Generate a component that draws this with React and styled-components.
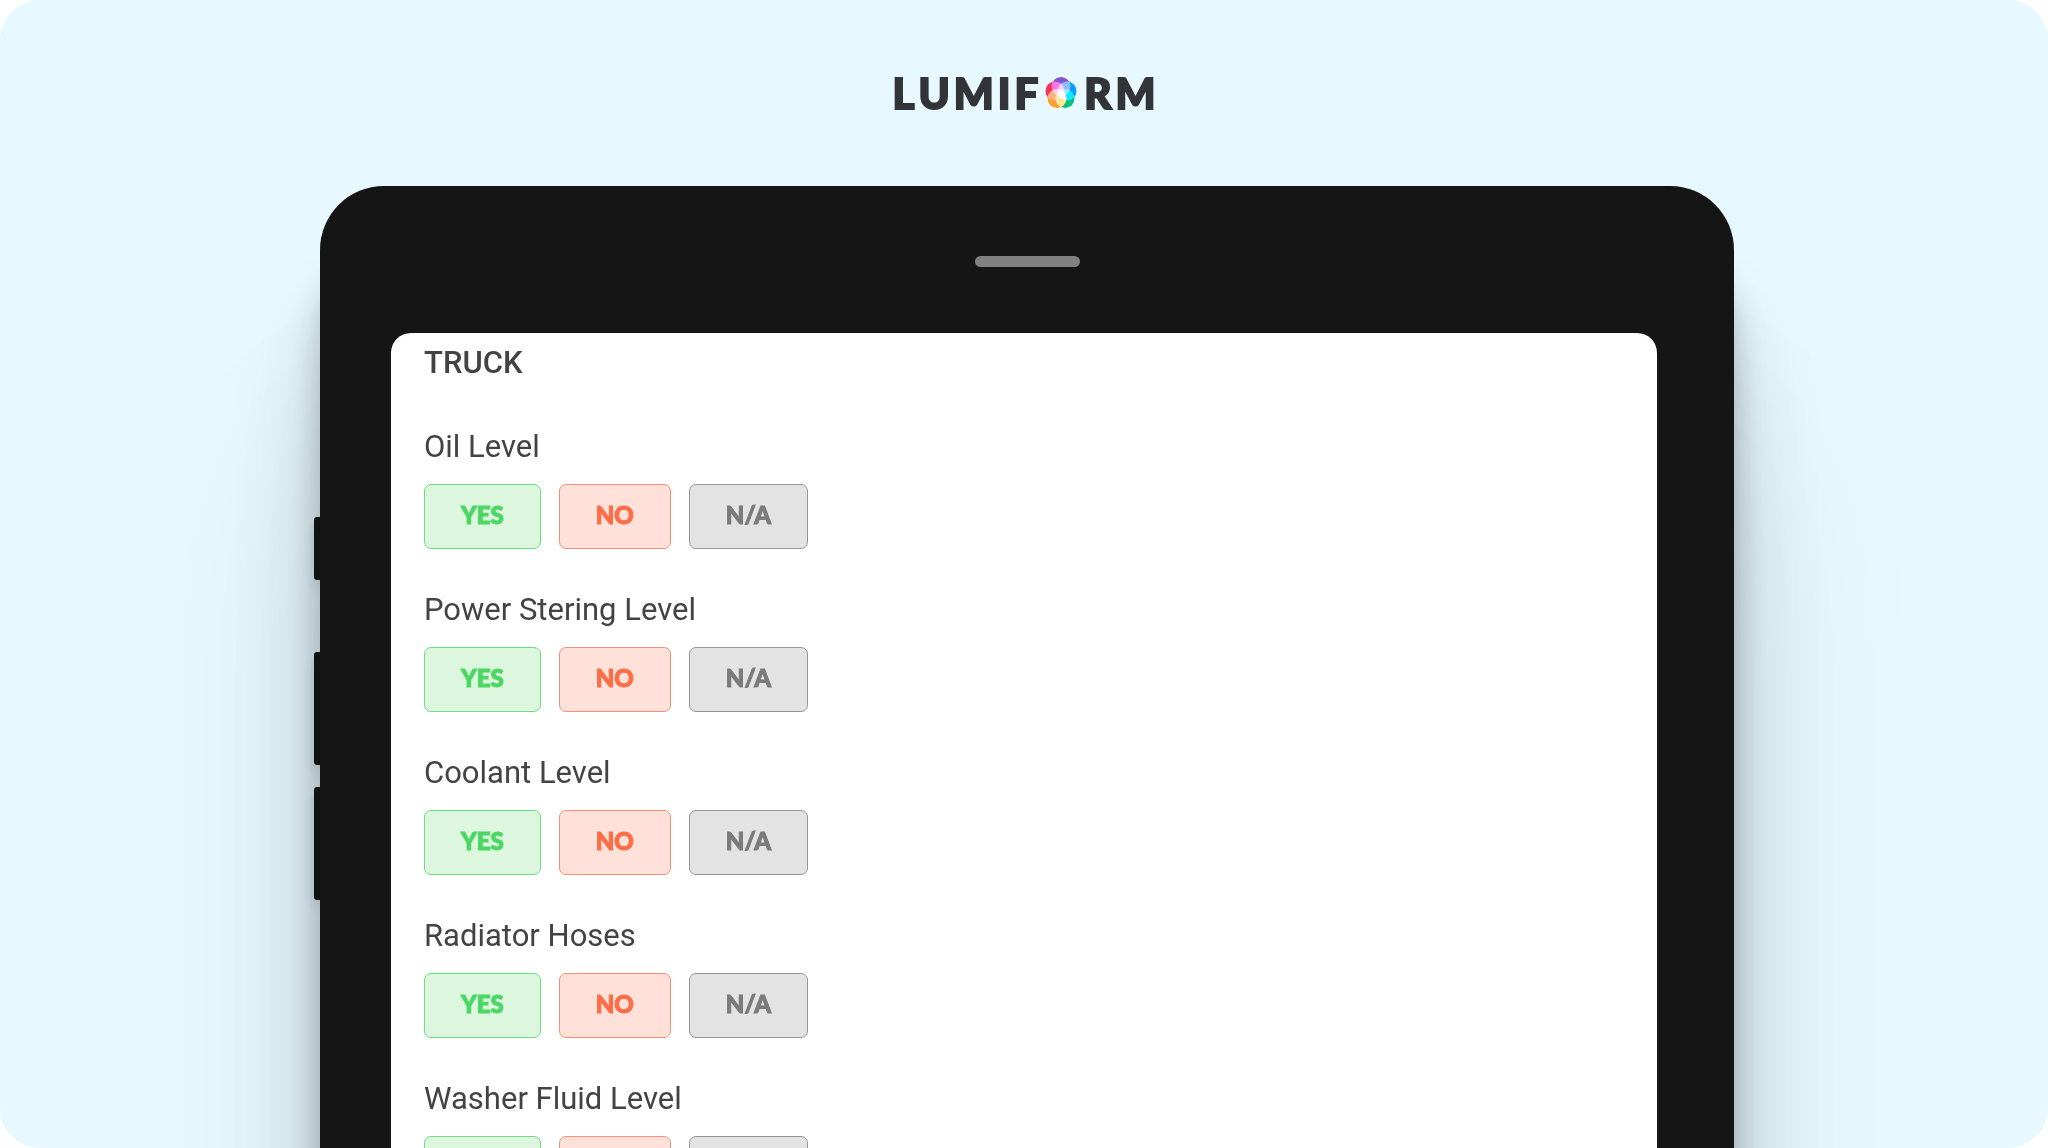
import React, { useState } from 'react';
import styled, { createGlobalStyle } from 'styled-components';

const GlobalStyle = createGlobalStyle`
  * {
    box-sizing: border-box;
  }
  body {
    margin: 0;
    background-color: #ffffff;
    font-family: Roboto, "Liberation Sans", sans-serif;
    color: #434343;
  }
`;

const Stage = styled.main`
  height: 100vh;
  overflow: hidden;
  border-radius: 40px;
  background-color: #e7f9ff;
`;

const Header = styled.header`
  display: flex;
  justify-content: center;
  padding: 67px 0;
`;

const Logo = styled.div`
  display: flex;
  align-items: center;
  gap: 7px;
  font-family: "Lato Black", Lato, sans-serif;
  font-size: 42px;
  font-weight: 900;
  line-height: 52px;
  color: #323438;
  -webkit-text-stroke: 2px #323438;
`;

const Wordmark = styled.span`
  display: flex;
  gap: 4px;
`;

const Tablet = styled.div`
  display: flex;
  align-items: flex-start;
  padding: 0 314px;
`;

const SideKeys = styled.div`
  display: flex;
  flex-direction: column;
  flex: none;
  width: 6px;
  padding-top: 331px;
`;

const SideKey = styled.div`
  height: ${(props) => (props.$short ? 63 : 113)}px;
  margin-bottom: ${(props) => (props.$short ? 72 : 22)}px;
  border-radius: 3px 0 0 3px;
  background-color: #151818;
  box-shadow: 0 8px 12px rgba(0, 0, 0, 0.12);
`;

const Body = styled.div`
  flex: 1;
  min-height: 140vh;
  padding-top: 70px;
  border-radius: 64px 64px 0 0;
  background-color: #151515;
  box-shadow:
    0 80px 32px rgba(0, 0, 0, 0.22),
    0 130px 90px rgba(0, 0, 0, 0.16),
    0 260px 200px rgba(0, 0, 0, 0.1);
`;

const Speaker = styled.div`
  width: 105px;
  height: 11px;
  margin: 0 auto 66px;
  border-radius: 6px;
  background-color: #808080;
`;

const Screen = styled.section`
  min-height: 120vh;
  margin: 0 77px 0 71px;
  padding: 10px 33px;
  border-radius: 20px 20px 0 0;
  background-color: #ffffff;
`;

const Title = styled.h1`
  margin: 0 0 44px;
  font-size: 31px;
  font-weight: 500;
  line-height: 40px;
`;

const Question = styled.div`
  margin-bottom: 41px;
`;

const Label = styled.h2`
  margin: 0 0 17px;
  font-size: 31px;
  font-weight: 400;
  line-height: 40px;
`;

const Answers = styled.div`
  display: flex;
  gap: 18px;
`;

const AnswerButton = styled.button`
  height: 65px;
  padding: 0 36px 4px;
  border: 1px solid ${(props) => props.$tone.border};
  border-radius: 7px;
  background-color: ${(props) => props.$tone.background};
  color: ${(props) => props.$tone.text};
  font-family: "Lato Black", Lato, sans-serif;
  font-size: 24px;
  font-weight: 900;
  -webkit-text-stroke: 1px ${(props) => props.$tone.text};
  &:hover {
    cursor: pointer;
  }
`;

const answers = [
  {
    text: 'YES',
    tone: { border: '#6bdf80', background: '#ddf7df', text: '#4bd763' },
  },
  {
    text: 'NO',
    tone: { border: '#f98e74', background: '#ffe1da', text: '#ff6d45' },
  },
  {
    text: 'N/A',
    tone: { border: '#979797', background: '#e3e3e3', text: '#7b7b7b' },
  },
];

const questions = [
  'Oil Level',
  'Power Stering Level',
  'Coolant Level',
  'Radiator Hoses',
  'Washer Fluid Level',
];

// overlapping petals, the blend gives the lighter tints where they meet
const Petals = styled.g`
  isolation: isolate;
  circle {
    mix-blend-mode: screen;
  }
`;

function Flower() {
  return (
    <svg width="32" height="34" viewBox="0 0 32 34" aria-hidden="true">
      <Petals>
        <circle cx="16" cy="10.5" r="9.5" fill="#8454cf" />
        <circle cx="10" cy="15" r="9.5" fill="#f5325e" />
        <circle cx="12" cy="22.5" r="9.5" fill="#ffa033" />
        <circle cx="20" cy="22.5" r="9.5" fill="#0bbf7c" />
        <circle cx="22" cy="15" r="9.5" fill="#0a9cff" />
      </Petals>
    </svg>
  );
}

function Letters({ text }) {
  return (
    <Wordmark>
      {text.split('').map((letter) => (
        <span key={letter}>{letter}</span>
      ))}
    </Wordmark>
  );
}

function QuestionItem({ id, label }) {
  const [selected, setSelected] = useState('');

  return (
    <Question role="group" aria-labelledby={id}>
      <Label id={id}>{label}</Label>
      <Answers>
        {answers.map(({ text, tone }) => (
          <AnswerButton
            key={text}
            type="button"
            $tone={tone}
            aria-pressed={selected === text}
            onClick={() => setSelected(text)}
          >
            {text}
          </AnswerButton>
        ))}
      </Answers>
    </Question>
  );
}

function App() {
  return (
    <>
      <GlobalStyle />
      <Stage>
        <Header>
          <Logo>
            <Letters text="LUMIF" />
            <Flower />
            <Letters text="RM" />
          </Logo>
        </Header>
        <Tablet>
          <SideKeys>
            <SideKey $short />
            <SideKey />
            <SideKey />
          </SideKeys>
          <Body>
            <Speaker />
            <Screen>
              <Title>TRUCK</Title>
              {questions.map((label, index) => (
                <QuestionItem key={label} id={`question-${index}`} label={label} />
              ))}
            </Screen>
          </Body>
        </Tablet>
      </Stage>
    </>
  );
}

export default App;
